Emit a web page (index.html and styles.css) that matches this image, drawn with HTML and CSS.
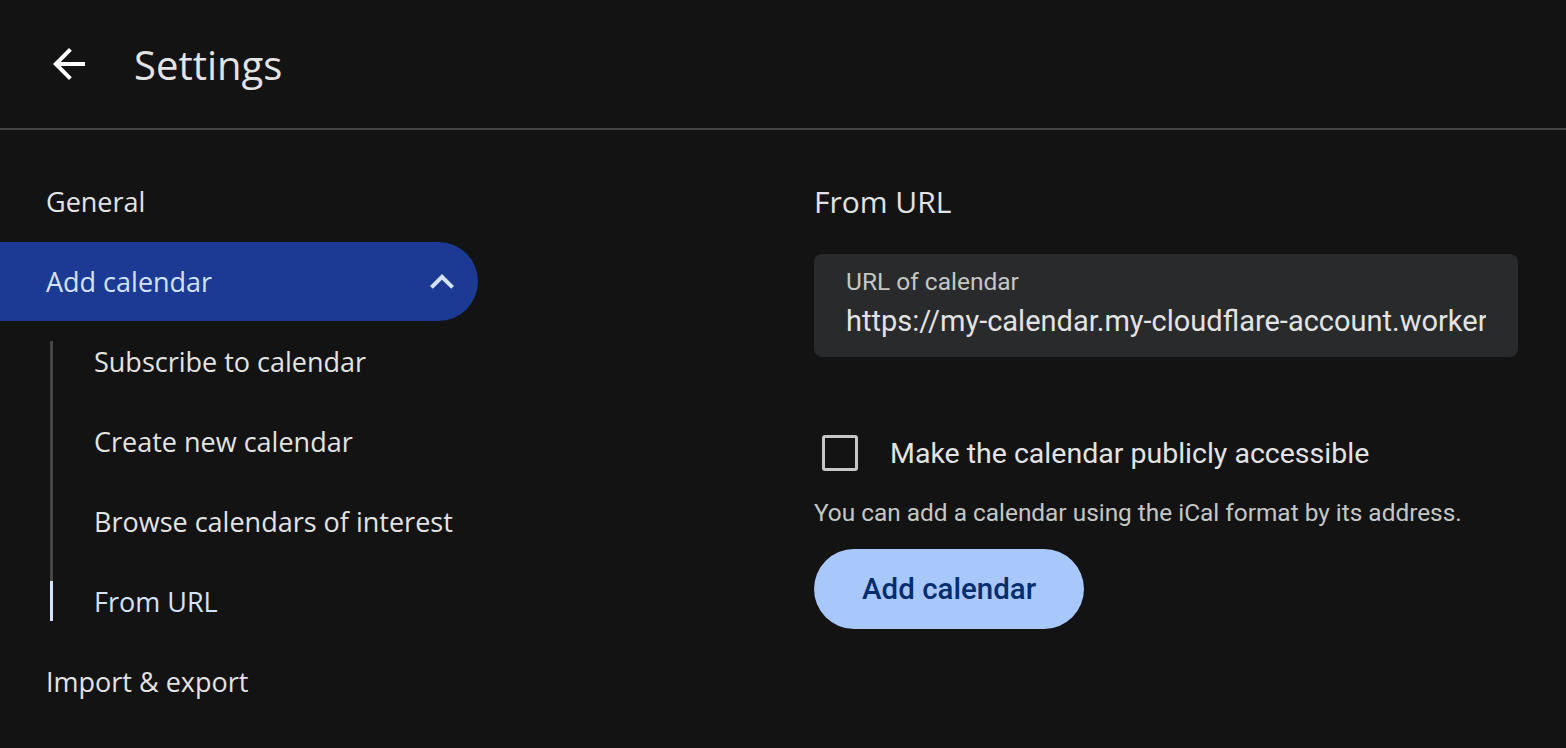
FILE: index.html
```html
<!DOCTYPE html>
<html lang="en">
<head>
    <meta charset="UTF-8">
    <meta name="viewport" content="width=device-width, initial-scale=1.0">
    <title>Settings</title>
    <link rel="stylesheet" href="styles.css">
</head>
<body>
    <div class="header">
        <button class="back-button" aria-label="Back">
            <svg viewBox="0 0 24 24" width="48" height="48"><path d="M20 11H7.83l5.59-5.59L12 4l-8 8 8 8 1.41-1.41L7.83 13H20v-2z" fill="currentColor"/></svg>
        </button>
        <h1>Settings</h1>
    </div>
    <div class="page">
        <div class="sidebar">
            <div class="nav-item">General</div>
            <div class="nav-item active">
                <span>Add calendar</span>
                <svg class="chevron" viewBox="0 0 24 24" width="48" height="48"><path d="M12 8l-6 6 1.41 1.41L12 10.83l4.59 4.58L18 14z" fill="currentColor"/></svg>
            </div>
            <ul class="sub-list">
                <li class="sub-item first"><span class="rail"></span><span>Subscribe to calendar</span></li>
                <li class="sub-item"><span class="rail"></span><span>Create new calendar</span></li>
                <li class="sub-item"><span class="rail"></span><span>Browse calendars of interest</span></li>
                <li class="sub-item last selected"><span class="rail"></span><span>From URL</span></li>
            </ul>
            <div class="nav-item">Import &amp; export</div>
        </div>
        <div class="content">
            <h2>From URL</h2>
            <div class="field">
                <label>URL of calendar</label>
                <div class="field-value">https://my-calendar.my-cloudflare-account.workers.dev/calendar.ics</div>
            </div>
            <div class="checkbox-row">
                <span class="checkbox"></span>
                <span>Make the calendar publicly accessible</span>
            </div>
            <p class="hint">You can add a calendar using the iCal format by its address.</p>
            <button class="primary-button">Add calendar</button>
        </div>
    </div>
</body>
</html>
```

FILE: styles.css
```css
body {
    margin: 0;
    padding: 0;
    background-color: #131313;
    color: #e3e3e3;
    font-family: 'Open Sans', 'Noto Sans', sans-serif;
    overflow: hidden;
}
.header {
    height: 128px;
    display: flex;
    align-items: center;
    border-bottom: 2px solid #444746;
}
.back-button {
    margin-left: 45px;
    width: 48px;
    height: 48px;
    padding: 0;
    border: none;
    background: none;
    color: #fff;
    display: flex;
}
.header h1 {
    margin: 0 0 0 41px;
    font-size: 40px;
    font-weight: 400;
    color: #e3e3e3;
}
.page {
    display: flex;
    padding-top: 31px;
}
.sidebar {
    width: 478px;
    flex-shrink: 0;
}
.nav-item {
    height: 80px;
    display: flex;
    align-items: center;
    padding-left: 46px;
    font-size: 27px;
    color: #e3e3e3;
}
.nav-item.active {
    margin-top: 1px;
    height: 79px;
    background-color: #1c3a94;
    color: #d3e3fd;
    border-radius: 0 40px 40px 0;
    justify-content: space-between;
    padding-right: 12px;
}
.chevron {
    color: #d3e3fd;
}
.sub-list {
    list-style: none;
    margin: 0;
    padding: 0 0 0 50px;
}
.sub-item {
    height: 80px;
    display: flex;
    font-size: 27px;
    color: #e3e3e3;
}
.sub-item span:last-child {
    align-self: center;
    padding-left: 41px;
}
.rail {
    width: 3px;
    background-color: #444746;
}
.sub-item.first .rail {
    margin-top: 20px;
}
.sub-item.last .rail {
    margin-bottom: 20px;
}
.sub-item.selected {
    color: #d3e3fd;
}
.sub-item.selected .rail {
    background: linear-gradient(#444746 20px, #d3e3fd 20px);
}
.content {
    margin-left: 336px;
    width: 704px;
    font-family: Roboto, 'Noto Sans', sans-serif;
}
.content h2 {
    margin: 21px 0 0;
    height: 40px;
    line-height: 40px;
    font-family: 'Open Sans', 'Noto Sans', sans-serif;
    font-size: 30px;
    font-weight: 400;
    color: #e3e3e3;
}
.field {
    margin-top: 32px;
    height: 103px;
    box-sizing: border-box;
    background-color: #282a2c;
    border-radius: 8px;
    padding: 14px 32px 0;
}
.field label {
    display: block;
    font-size: 24.5px;
    line-height: 28px;
    color: #c4c7c5;
}
.field-value {
    margin-top: 8px;
    font-size: 29px;
    line-height: 34px;
    white-space: nowrap;
    overflow: hidden;
    color: #e3e3e3;
}
.checkbox-row {
    margin-top: 78px;
    display: flex;
    align-items: center;
    height: 36px;
    font-size: 28.5px;
    color: #e3e3e3;
}
.checkbox {
    width: 30px;
    height: 30px;
    border: 3px solid #c4c7c5;
    border-radius: 3px;
    margin-left: 8px;
    margin-right: 32px;
}
.hint {
    margin: 27px 0 0;
    font-size: 24.4px;
    line-height: 30px;
    color: #c4c7c5;
}
.primary-button {
    margin-top: 21px;
    height: 80px;
    padding: 0 48px;
    border: none;
    border-radius: 40px;
    background-color: #a8c7fa;
    color: #062e6f;
    font-family: Roboto, sans-serif;
    font-size: 29.5px;
    font-weight: 500;
}
```
